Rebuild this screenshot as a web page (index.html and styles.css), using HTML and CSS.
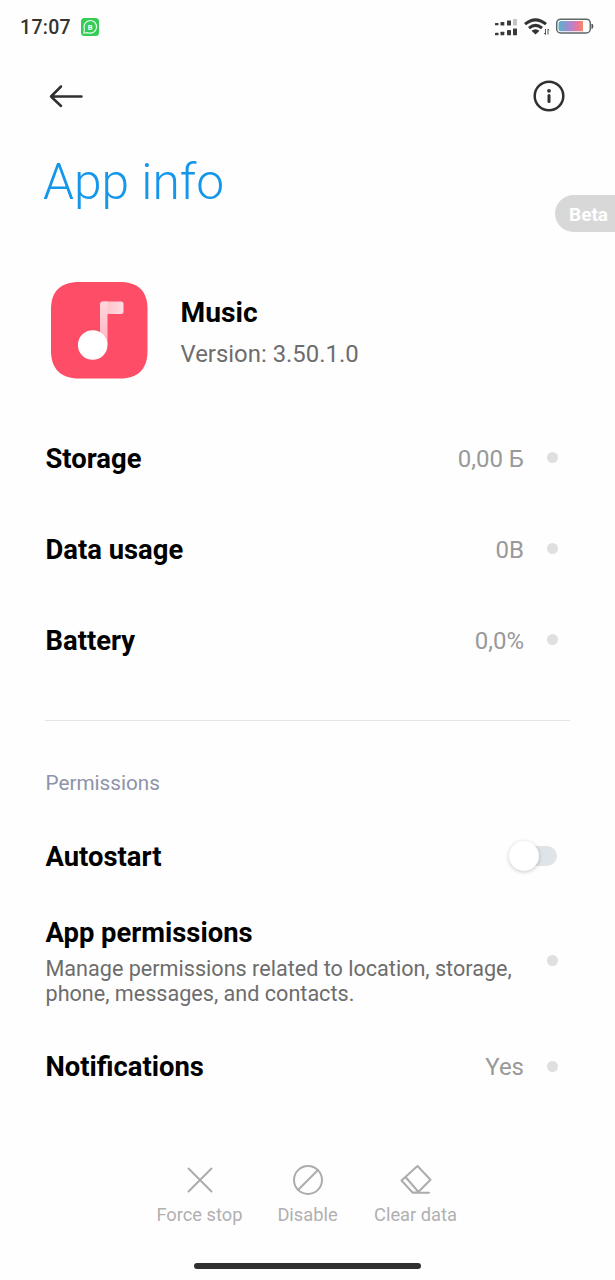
FILE: index.html
```html
<!DOCTYPE html>
<html lang="en">
<head>
<meta charset="utf-8">
<title>App info</title>
<link rel="stylesheet" href="styles.css">
</head>
<body>
<div class="screen">
  <div class="status">
    <span class="time">17:07</span>
    <svg class="wa" width="20" height="20" viewBox="0 0 20 20">
      <rect x="1" y="1" width="18" height="18" rx="3.500" fill="#35cc56"/>
      <path d="M4 16l.3-4.200A6.300 6.300 0 1 1 8 15.700z" fill="none" stroke="#e4fae8" stroke-width="1.200"/>
      <text x="10.200" y="12.600" text-anchor="middle" class="wa-b">B</text>
    </svg>
    <svg class="sys" width="102" height="22" viewBox="0 0 102 22">
      <g fill="#3a3a3a">
        <rect x="0" y="6" width="3.500" height="2.200" rx=".5"/><rect x="5.500" y="5" width="3.800" height="3.500" rx=".5"/><rect x="12" y="3.500" width="4" height="5" rx=".6"/>
        <rect x="18" y="2" width="4" height="6.500" rx=".6" fill="#c4c4c4"/>
        <rect x="0" y="15.800" width="3.500" height="2.500" rx=".5"/><rect x="5.500" y="14.800" width="3.800" height="3.500" rx=".5"/><rect x="12" y="13" width="4" height="5.300" rx=".6"/><rect x="18" y="11.500" width="4" height="6.800" rx=".6"/>
      </g>
      <g fill="none" stroke="#333" stroke-width="3">
        <path d="M30 7.200Q40.500-1.500 51 7.200"/><path d="M34 11.200Q40.500 5.600 47 11.200"/>
      </g>
      <path d="M36.500 13.800Q40.500 10.800 44.500 13.800L40.500 17.500z" fill="#333"/>
      <path d="M50.500 12v5.500l-1.500-1.500M53 17.500V12l1.200 1.200" fill="none" stroke="#555" stroke-width="1"/>
      <defs><linearGradient id="bat"><stop offset="0" stop-color="#58b2cc"/><stop offset=".5" stop-color="#b183d0"/><stop offset=".8" stop-color="#ee7694"/><stop offset="1" stop-color="#f3896f"/></linearGradient></defs>
      <rect x="61.700" y="2.200" width="33.600" height="13.800" rx="4" fill="#fff" stroke="#5d6669" stroke-width="1.500"/>
      <path d="M66 4h22v10.300H66a2.500 2.500 0 0 1-2.500-2.500V6.500A2.500 2.500 0 0 1 66 4z" fill="url(#bat)"/>
      <path d="M97 7q2 2.200 0 4.500z" fill="#555" stroke="#555"/>
    </svg>
  </div>
  <div class="nav">
    <svg width="36" height="26" viewBox="0 0 36 26" fill="none" stroke="#303030" stroke-width="2.500" stroke-linecap="round" stroke-linejoin="round"><path d="M33.500 13.500H3M13 3.500L3 13.500l10 9.500"/></svg>
    <svg width="34" height="34" viewBox="0 0 34 34" fill="none" stroke="#303030" stroke-width="2.500"><circle cx="17" cy="17" r="14.300"/><circle cx="17" cy="11.800" r="1.900" fill="#303030" stroke="none"/><path d="M17 16.500v6" stroke-width="3" stroke-linecap="round"/></svg>
  </div>
  <div class="title">App info</div>
  <div class="beta">Beta</div>
  <div class="app">
    <svg width="98" height="98" viewBox="0 0 98 98">
      <defs><linearGradient id="flag" x1="0" x2="1"><stop offset="0" stop-color="#ffbcc7"/><stop offset="1" stop-color="#ffdbe1"/></linearGradient>
      <linearGradient id="stem" x1="0" x2="0" y1="0" y2="1"><stop offset="0" stop-color="#ffd5dc"/><stop offset="1" stop-color="#ffb7c3"/></linearGradient></defs>
      <path d="M29 1H70C88 1 97.500 10 97.500 28V70C97.500 88 88 97.500 70 97.500H29C11 97.500 1 88 1 70V28C1 10 11 1 29 1z" fill="#fd4d67"/>
      <rect x="51" y="20.500" width="22.500" height="12.500" rx="2.500" fill="url(#flag)"/>
      <path d="M50 23a2.500 2.500 0 0 1 2.500-2.500H57.500V64H50z" fill="url(#stem)"/>
      <circle cx="42.700" cy="64" r="14.800" fill="#fff"/>
    </svg>
    <div class="app-text">
      <div class="name">Music</div>
      <div class="version">Version: 3.50.1.0</div>
    </div>
  </div>
  <div class="usage">
    <div class="row"><span class="label">Storage</span><span class="value">0,00 Б</span><i class="dot"></i></div>
    <div class="row"><span class="label">Data usage</span><span class="value">0B</span><i class="dot"></i></div>
    <div class="row"><span class="label">Battery</span><span class="value">0,0%</span><i class="dot"></i></div>
  </div>
  <div class="divider"></div>
  <div class="section">Permissions</div>
  <div class="row auto"><span class="label">Autostart</span><div class="toggle"><i class="knob"></i></div></div>
  <div class="row perms">
    <div class="perm-text">
      <div class="label">App permissions</div>
      <div class="desc">Manage permissions related to location, storage,<br>phone, messages, and contacts.</div>
    </div>
    <i class="dot"></i>
  </div>
  <div class="row notif"><span class="label">Notifications</span><span class="value">Yes</span><i class="dot"></i></div>
  <div class="actions">
    <div class="action">
      <svg width="34" height="34" viewBox="0 0 34 34"><path d="M5.500 5.500l23 23M28.500 5.500l-23 23"/></svg>
      <span>Force stop</span>
    </div>
    <div class="action">
      <svg width="34" height="34" viewBox="0 0 34 34"><circle cx="17" cy="17" r="14"/><path d="M7 27L27 7"/></svg>
      <span>Disable</span>
    </div>
    <div class="action">
      <svg width="34" height="34" viewBox="0 0 34 34"><path d="M18.500 3L31.500 16.800 18.800 29.500H13.500L2.500 17.500zM6.500 14L19.500 29M14 29.800H30"/></svg>
      <span>Clear data</span>
    </div>
  </div>
  <div class="home"></div>
</div>
</body>
</html>
```

FILE: styles.css
```css
body { margin: 0; background: #fefefe; font-family: Roboto, "Liberation Sans", sans-serif; }
.screen { position: relative; box-sizing: border-box; width: 615px; height: 1280px; overflow: hidden; display: flex; flex-direction: column; background: #fefefe; white-space: nowrap; }
.status { height: 54px; display: flex; align-items: center; padding: 0 20px; flex: none; }
.time { font-size: 19.500px; font-weight: 500; color: #333; letter-spacing: .3px; width: 60px; }
.wa-b { font-size: 7.500px; font-weight: 700; fill: #fff; }
.sys { margin-left: auto; margin-right: -2px; padding-top: 2px; }
.nav { height: 84px; display: flex; align-items: center; justify-content: space-between; padding: 0 49px 0 48px; flex: none; }
.title { height: 88px; line-height: 88px; padding-left: 43px; font-size: 49.700px; font-weight: 300; color: #1496ea; }
.beta { position: absolute; right: 0; top: 195px; width: 60px; height: 37px; box-sizing: border-box; padding-left: 14px; border-radius: 19px 0 0 19px; background: #d8d8d8; color: #fff; font-size: 19px; font-weight: 700; line-height: 39px; }
.app { display: flex; align-items: center; gap: 32.500px; height: 98px; padding-left: 50px; margin-top: 55px; }
.app-text { padding-top: 8px; }
.name { font-size: 28.200px; font-weight: 700; line-height: 40px; color: #000; }
.version { font-size: 23.900px; line-height: 42px; color: #6d6d6d; }
.usage { margin-top: 34px; }
.row { display: flex; align-items: center; height: 91px; padding: 0 57px 0 45.500px; }
.label { font-size: 27.400px; font-weight: 700; line-height: 32px; color: #000; }
.value { margin-left: auto; font-size: 24px; color: #999; }
.dot { width: 11px; height: 11px; border-radius: 50%; background: #dfdfdf; margin-left: 23px; flex: none; }
.usage .dot, .notif .dot { margin-bottom: 2px; }
.divider { height: 1px; background: #e4e4e4; margin: 34px 45px 0; flex: none; }
.section { height: 62px; line-height: 30px; margin-top: 47px; padding-left: 45.500px; font-size: 20.700px; color: #8d93a9; box-sizing: border-box; }
.auto { height: 52px; }
.auto .label { padding-top: 1px; }
.toggle { position: relative; margin-left: auto; width: 42px; height: 20px; border-radius: 10px; background: #dfe4e8; margin-right: 1px; }
.knob { position: absolute; left: -6px; top: -5px; width: 30px; height: 30px; border-radius: 50%; background: #fff; box-shadow: 0 1px 4px rgba(0,0,0,.22); }
.perms { height: 86px; margin-top: 35px; align-items: flex-start; }
.desc { font-size: 21.600px; line-height: 25px; color: #6d6d6d; margin-top: 7px; }
.perms .dot { margin-left: auto; margin-top: 38px; }
.notif { height: 60px; margin-top: 34px; }
.actions { display: flex; justify-content: center; margin-top: 66px; }
.action { width: 108px; display: flex; flex-direction: column; align-items: center; color: #b0b0b0; font-size: 18.300px; line-height: 36px; }
.action svg { fill: none; stroke: #acacac; stroke-width: 2; stroke-linecap: round; stroke-linejoin: round; }
.home { position: absolute; left: 194px; top: 1263px; width: 227px; height: 6px; border-radius: 3px; background: #303030; }
```
